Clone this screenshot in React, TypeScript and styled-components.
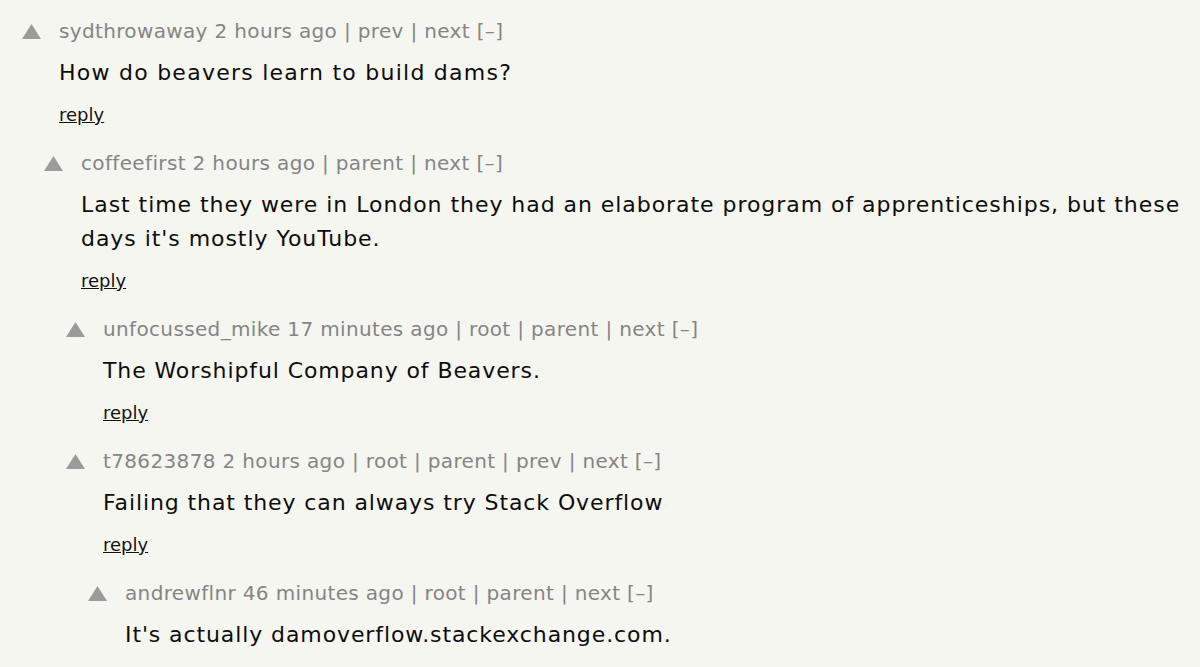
import React from "react";
import styled, { createGlobalStyle } from "styled-components";

const Global = createGlobalStyle`
  html, body { margin: 0; padding: 0; background: #f6f6f1; }
  body { font-family: "DejaVu Sans", Verdana, sans-serif; }
`;

const Page = styled.div`
  width: 1200px;
  height: 667px;
  overflow: hidden;
  background: #f6f6f1;
  padding-top: 19px;
  box-sizing: border-box;
`;

const Row = styled.div<{ $depth: number }>`
  display: flex;
  align-items: flex-start;
  padding-left: ${(p) => 22 + p.$depth * 22}px;
  margin-bottom: 24px;
`;

const Vote = styled.div`
  flex: 0 0 19px;
  height: 24px;
  margin-right: 18px;
  display: flex;
  align-items: center;
`;

const Content = styled.div`
  flex: 1;
  min-width: 0;
  padding-right: 12px;
`;

const Meta = styled.div`
  font-size: 20px;
  letter-spacing: 0.35px;
  line-height: 24px;
  color: #858585;
  white-space: nowrap;
`;

const Body = styled.div<{ $spacing: number }>`
  margin-top: 13px;
  font-size: 22px;
  letter-spacing: ${(p) => p.$spacing}px;
  line-height: 34px;
  color: #0d0d0d;
`;

const Reply = styled.div`
  margin-top: 13px;
  font-size: 18px;
  line-height: 24px;
  color: #111;
  text-decoration: underline;
`;

const Triangle = () => (
  <svg width="19" height="15" viewBox="0 0 19 15">
    <polygon points="9.5,0 19,15 0,15" fill="#9b9b9b" />
  </svg>
);

type C = { user: string; age: string; links: string[]; depth: number; text: string; reply?: boolean; spacing: number };

const comments: C[] = [
  { user: "sydthrowaway", age: "2 hours ago", links: ["prev", "next"], depth: 0, text: "How do beavers learn to build dams?", reply: true, spacing: 1.25 },
  { user: "coffeefirst", age: "2 hours ago", links: ["parent", "next"], depth: 1, text: "Last time they were in London they had an elaborate program of apprenticeships, but these days it's mostly YouTube.", reply: true, spacing: 0.95 },
  { user: "unfocussed_mike", age: "17 minutes ago", links: ["root", "parent", "next"], depth: 2, text: "The Worshipful Company of Beavers.", reply: true, spacing: 0.9 },
  { user: "t78623878", age: "2 hours ago", links: ["root", "parent", "prev", "next"], depth: 2, text: "Failing that they can always try Stack Overflow", reply: true, spacing: 0.9 },
  { user: "andrewflnr", age: "46 minutes ago", links: ["root", "parent", "next"], depth: 3, text: "It's actually damoverflow.stackexchange.com.", reply: false, spacing: 0.9 },
];

export default function App() {
  return (
    <>
      <Global />
      <Page>
        {comments.map((c) => (
          <Row key={c.user} $depth={c.depth}>
            <Vote>
              <Triangle />
            </Vote>
            <Content>
              <Meta>
                {c.user} {c.age} | {c.links.join(" | ")} [–]
              </Meta>
              <Body $spacing={c.spacing}>{c.text}</Body>
              {c.reply && <Reply>reply</Reply>}
            </Content>
          </Row>
        ))}
      </Page>
    </>
  );
}
